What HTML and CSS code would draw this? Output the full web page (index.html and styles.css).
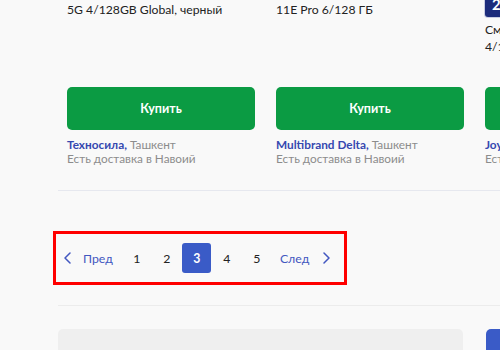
FILE: index.html
```html
<!DOCTYPE html>
<html lang="ru">
  <head>
    <meta charset="UTF-8" />
    <meta name="viewport" content="width=device-width, initial-scale=1.0" />
    <title>Каталог</title>
    <link rel="stylesheet" href="styles.css">
  </head>
  <body>
    <div class="catalog">
      <div class="products">
        <div class="card">
          <div class="card-top">
            <p class="card-title">Смартфон Xiaomi Redmi Note 12 Pro<br />5G 4/128GB Global, черный</p>
          </div>
          <button type="button" class="buy">Купить</button>
          <p class="seller"><span class="shop">Техносила,</span> Ташкент</p>
          <p class="delivery">Есть доставка в Навоий</p>
        </div>

        <div class="card">
          <div class="card-top">
            <p class="card-title">Смартфон Xiaomi Redmi Note<br />11E Pro 6/128 ГБ</p>
          </div>
          <button type="button" class="buy">Купить</button>
          <p class="seller"><span class="shop">Multibrand Delta,</span> Ташкент</p>
          <p class="delivery">Есть доставка в Навоий</p>
        </div>

        <div class="card">
          <div class="card-top">
            <span class="badge">2</span>
            <p class="card-title">Смартфон Samsung Galaxy A23<br />4/128GB, черный</p>
          </div>
          <button type="button" class="buy">Купить</button>
          <p class="seller"><span class="shop">Joybox,</span> Ташкент</p>
          <p class="delivery">Есть доставка в Навоий</p>
        </div>
      </div>

      <div class="pager-row">
        <nav class="pagination">
          <a href="#" class="page-nav">
            <svg width="7" height="12" viewBox="0 0 7 12"><path d="M6 1 1 6l5 5" fill="none" stroke="currentColor" stroke-width="1.5" stroke-linecap="round" stroke-linejoin="round"/></svg>
            <span>Пред</span>
          </a>
          <a href="#" class="page">1</a>
          <a href="#" class="page">2</a>
          <a href="#" class="page active">3</a>
          <a href="#" class="page">4</a>
          <a href="#" class="page">5</a>
          <a href="#" class="page-nav">
            <span>След</span>
            <svg width="7" height="12" viewBox="0 0 7 12"><path d="M1 1l5 5-5 5" fill="none" stroke="currentColor" stroke-width="1.5" stroke-linecap="round" stroke-linejoin="round"/></svg>
          </a>
        </nav>
      </div>

      <div class="bottom-row">
        <div class="search-box"></div>
        <div class="search-btn"></div>
      </div>
    </div>
  </body>
</html>
```

FILE: styles.css
```css
body {
  font-family: "Lato", sans-serif;
  background-color: #f9f9f9;
  color: #222;
  margin: 0;
  padding: 0;
  overflow: hidden;
}

.catalog {
  padding-left: 58px;
}

.products {
  display: grid;
  grid-template-columns: repeat(3, 188px);
  column-gap: 21px;
  padding: 0 0 0 9px;
  margin-top: -18px;
  border-bottom: 1px solid #e6e8ef;
  box-sizing: border-box;
  height: 209px;
}

.card {
  display: flex;
  flex-direction: column;
}

.card-top {
  height: 105px;
}

.card-title {
  margin: 2px 0 0;
  font-size: 12.2px;
  line-height: 17px;
  color: #222;
  white-space: nowrap;
}

.badge {
  display: block;
  width: fit-content;
  margin-top: 10px;
  padding: 0 7px;
  height: 25px;
  line-height: 25px;
  border-radius: 3px;
  background-color: #1c2c7c;
  color: #fff;
  font-weight: bold;
  font-size: 15px;
  box-shadow: 0 0 0 1px #c9cde3;
}

.badge + .card-title {
  margin-top: 4px;
}

.buy {
  height: 43px;
  border: none;
  border-radius: 5px;
  background-color: #0b9b43;
  color: #fff;
  font-family: inherit;
  font-size: 12.5px;
  font-weight: bold;
  cursor: pointer;
}

.seller,
.delivery {
  margin: 0;
  font-size: 11.8px;
  line-height: 14px;
  color: #8c8c8c;
  white-space: nowrap;
}

.seller {
  margin-top: 8px;
}

.shop {
  color: #3548b0;
  font-weight: bold;
}

.pager-row {
  height: 115px;
  border-bottom: 1px solid #ececec;
  box-sizing: border-box;
  padding-top: 40px;
}

.pagination {
  display: inline-flex;
  align-items: center;
  height: 48px;
  margin-left: -5px;
  padding: 0 14px 0 8px;
  border: 3px solid #ff0000;
}

.pagination a {
  text-decoration: none;
  font-size: 12.3px;
}

.page-nav {
  display: flex;
  align-items: center;
  gap: 12px;
  color: #4257c0;
}

.page-nav:last-child {
  gap: 14px;
}

.page-nav:first-child {
  margin-right: 9px;
}

.page-nav:last-child {
  margin-left: 8px;
}

.page {
  width: 29px;
  height: 30px;
  margin: 0 0.5px;
  display: flex;
  align-items: center;
  justify-content: center;
  color: #222;
  border-radius: 3px;
}

.page.active {
  background-color: #3a5bc7;
  color: #fff;
  font-weight: bold;
}

.bottom-row {
  display: flex;
  gap: 23px;
  padding-top: 23px;
}

.search-box {
  flex-shrink: 0;
  width: 405px;
  height: 40px;
  background-color: #efefef;
  border-radius: 5px;
}

.search-btn {
  flex-shrink: 0;
  width: 40px;
  height: 40px;
  background-color: #3a5bc7;
  border-radius: 5px;
}
```
